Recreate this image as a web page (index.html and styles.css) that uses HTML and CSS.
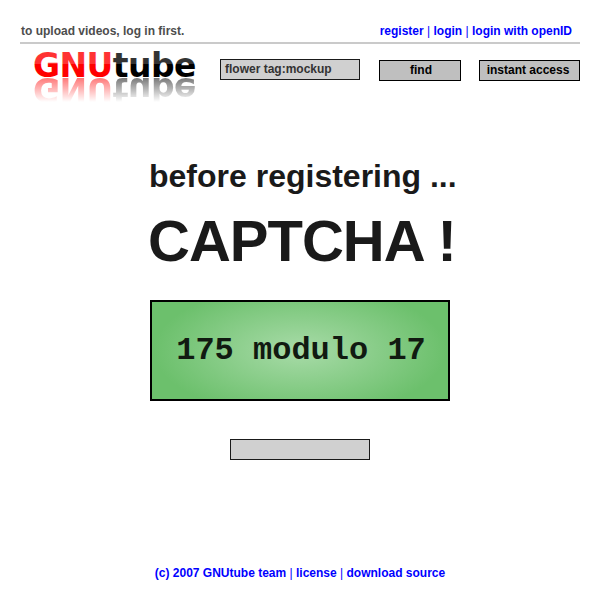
FILE: index.html
```html
<!DOCTYPE html>
<html lang="en">
<head>
<meta charset="utf-8">
<title>GNUtube</title>
<link rel="stylesheet" href="styles.css">
</head>
<body>
<header class="topbar">
  <span class="hint">to upload videos, log in first.</span>
  <nav class="account"><a>register</a> <i>|</i> <a>login</a> <i>|</i> <a>login with openID</a></nav>
</header>
<div class="toolbar">
  <svg class="logo" width="178" height="60" viewBox="0 0 178 60" role="img" aria-label="GNUtube">
    <defs>
      <linearGradient id="red" gradientUnits="userSpaceOnUse" x1="0" y1="0" x2="0" y2="40">
        <stop offset=".51" stop-color="#ff3333"/><stop offset=".51" stop-color="#ff0000"/>
      </linearGradient>
      <linearGradient id="black" gradientUnits="userSpaceOnUse" x1="0" y1="0" x2="0" y2="40">
        <stop offset=".51" stop-color="#333333"/><stop offset=".51" stop-color="#000000"/>
      </linearGradient>
      <linearGradient id="fade" gradientUnits="userSpaceOnUse" x1="0" y1="33" x2="0" y2="58">
        <stop offset="0" stop-color="#fff" stop-opacity=".55"/><stop offset="1" stop-color="#fff" stop-opacity="0"/>
      </linearGradient>
      <mask id="mirror" maskUnits="userSpaceOnUse" x="0" y="33" width="178" height="27">
        <rect x="0" y="33" width="178" height="27" fill="url(#fade)"/>
      </mask>
    </defs>
    <text class="wordmark" x="13" y="33" textLength="163.5"><tspan fill="url(#red)">GNU</tspan><tspan fill="url(#black)">tube</tspan></text>
    <g mask="url(#mirror)">
      <text class="wordmark" transform="translate(0 67) scale(1 -1)" x="13" y="33" textLength="163.5" aria-hidden="true"><tspan fill="#ff0000">GNU</tspan><tspan fill="#000000">tube</tspan></text>
    </g>
  </svg>
  <div class="search">flower tag:mockup</div>
  <div class="button find">find</div>
  <div class="button instant">instant access</div>
</div>
<main class="content">
  <h2 class="lead">before registering ...</h2>
  <h1 class="title">CAPTCHA !</h1>
  <div class="challenge">175 modulo 17</div>
  <div class="answer"></div>
</main>
<footer class="footer"><a>(c) 2007 GNUtube team</a> <i>|</i> <a>license</a> <i>|</i> <a>download source</a></footer>
</body>
</html>
```
FILE: styles.css
```css
* { box-sizing: border-box; }
body {
  margin: 0;
  width: 600px;
  height: 600px;
  overflow: hidden;
  background: #fff;
  font: bold 12px/14px "Liberation Sans", Arial, sans-serif;
  display: flex;
  flex-direction: column;
}
.topbar {
  display: flex;
  justify-content: space-between;
  margin: 0 20px;
  padding: 24px 8px 0 1px;
  height: 44px;
  border-bottom: 2px solid #cacaca;
}
.hint { color: #4d4d4d; }
.account, .footer { color: #0000ff; white-space: nowrap; }
i { font-style: normal; font-weight: normal; }
.toolbar {
  display: flex;
  align-items: flex-start;
  height: 76px;
  padding-left: 20px;
}
.logo { flex: none; width: 178px; height: 60px; }
.wordmark { font: bold 33px "DejaVu Sans", sans-serif; }
.search {
  width: 140px;
  height: 21px;
  margin: 15px 0 0 22px;
  padding: 2px 4px;
  border: 1px solid #1a1a1a;
  background: #d0d0d0;
  color: #333;
}
.button {
  height: 21px;
  padding-top: 2px;
  border: 1px solid #000;
  background: #bfbfbf;
  color: #000;
  text-align: center;
  white-space: nowrap;
}
.find { width: 82px; margin: 16px 0 0 19px; padding-left: 2px; }
.instant { width: 101px; margin: 16px 0 0 18px; padding-right: 3px; }
.content {
  display: flex;
  flex-direction: column;
  width: 308px;
  margin-left: 148px;
}
.lead, .title { margin: 0; color: #1a1a1a; white-space: nowrap; }
.lead { margin-top: 36px; padding-left: 1px; font-size: 32px; line-height: 40px; height: 40px; }
.title { margin-top: 10px; font-size: 58px; letter-spacing: -1px; line-height: 70px; height: 94px; }
.challenge {
  width: 300px;
  height: 101px;
  margin-left: 2px;
  padding-left: 2px;
  border: 2px solid #000;
  background: radial-gradient(ellipse 146px 66px at 50% 50%, #a8dba8, #6cc06c);
  font: bold 32px/97px "Liberation Mono", monospace;
  color: #111a11;
  text-align: center;
}
.answer {
  width: 140px;
  height: 21px;
  margin: 38px 0 0 82px;
  border: 1px solid #1a1a1a;
  background: #d0d0d0;
}
.footer { margin-top: 106px; text-align: center; }
```
